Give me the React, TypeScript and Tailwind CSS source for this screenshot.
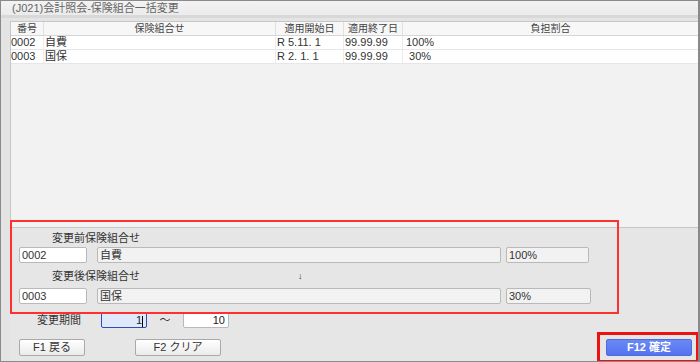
const font = { fontFamily: '"Liberation Sans", "Noto Sans CJK JP", sans-serif' };

const rows = [
  { code: "0002", name: "自費", from: "R 5.11. 1", to: "99.99.99", rate: "100%" },
  { code: "0003", name: "国保", from: "R 2. 1. 1", to: "99.99.99", rate: " 30%" },
];

const cols = "grid grid-cols-[33px_232px_68px_59px_1fr]";

function Field({ w, value, white }: { w: string; value: string; white?: boolean }) {
  return (
    <div
      className={`${w} h-[16px] rounded-[2px] border border-[#b9b9b9] pl-[2px] text-[11px] leading-[14px] text-[#333] ${white ? "bg-white" : "bg-[#f2f2f2]"}`}
    >
      {value}
    </div>
  );
}

function Btn({ w, label }: { w: string; label: string }) {
  return (
    <div
      className={`${w} h-[17px] rounded-[2px] border border-[#a9a9a9] bg-gradient-to-b from-white to-[#ebebeb] text-center text-[11px] leading-[15px] text-[#333]`}
    >
      {label}
    </div>
  );
}

export default function App() {
  return (
    <div className="relative w-[700px] h-[362px] overflow-hidden bg-[#e6e6e6] border border-r-2 border-[#8a8a8a] flex flex-col" style={font}>
      {/* title bar */}
      <div className="h-[14px] bg-gradient-to-b from-[#f3f3f3] to-[#ebebeb] pl-[11px] text-[11px] leading-[14px] text-[#666]">
        (J021)会計照会-保険組合一括変更
      </div>
      <div className="h-[3px] bg-[#d8d8d8]" />
      <div className="h-[3px] bg-[#e4e4e4]" />

      <div className="flex flex-1">
        <div className="w-[9px] bg-[#e4e4e4]" />
        <div className="flex-1 flex flex-col">
          {/* list */}
          <div className="h-[207px] bg-[#f2f2f2] border-l border-t border-b border-[#c6c6c6]">
            <div className={`${cols} h-[14px] bg-[#f7f7f7] border-b border-[#d6d6d6] text-[10px] leading-[13px] text-[#444] text-center`}>
              <div className="border-r border-[#e0e0e0]">番号</div>
              <div className="border-r border-[#e0e0e0]">保険組合せ</div>
              <div className="border-r border-[#e0e0e0]">適用開始日</div>
              <div className="border-r border-[#e0e0e0]">適用終了日</div>
              <div>負担割合</div>
            </div>
            {rows.map((r) => (
              <div key={r.code} className={`${cols} h-[14px] bg-white border-b border-[#e6e6e6] text-[11px] leading-[13px] text-[#333]`}>
                <div className="border-r border-[#ececec]">{r.code}</div>
                <div className="border-r border-[#ececec] pl-[1px]">{r.name}</div>
                <div className="border-r border-[#ececec] pl-[1px]">{r.from}</div>
                <div className="border-r border-[#ececec] pl-[1px]">{r.to}</div>
                <div className="pl-[3px] whitespace-pre">{r.rate}</div>
              </div>
            ))}
          </div>

          {/* edit panel */}
          <div className="flex-1 flex flex-col text-[11px] text-[#333]">
            <div className="mt-[3px] pl-[42px] h-[14px] leading-[14px]">変更前保険組合せ</div>
            <div className="mt-[2px] flex pl-[9px]">
              <Field w="w-[68px]" value="0002" white />
              <div className="w-[10px]" />
              <Field w="w-[404px]" value="自費" />
              <div className="w-[5px]" />
              <Field w="w-[83px]" value="100%" />
            </div>
            <div className="mt-[6px] flex pl-[42px] h-[14px] leading-[14px]">
              <span className="w-[246px]">変更後保険組合せ</span>
              <span className="text-[9px]">↓</span>
            </div>
            <div className="mt-[5px] flex pl-[9px]">
              <Field w="w-[68px]" value="0003" white />
              <div className="w-[10px]" />
              <Field w="w-[404px]" value="国保" />
              <div className="w-[5px]" />
              <Field w="w-[85px]" value="30%" />
            </div>
            <div className="mt-[8px] flex items-center pl-[27px]">
              <span className="w-[64px] leading-[14px]">変更期間</span>
              <div className="w-[46px] h-[16px] rounded-[2px] border border-[#2b4db8] bg-[#dfe9fb] pr-[3px] text-right leading-[14px] text-[#222]">
                1<span className="inline-block w-px h-[11px] bg-black align-middle" />
              </div>
              <span className="w-[36px] text-center leading-[14px]">〜</span>
              <div className="w-[46px] h-[16px] rounded-[2px] border border-[#b9b9b9] bg-white pr-[3px] text-right leading-[14px] text-[#222]">
                10
              </div>
            </div>
            <div className="mt-[11px] flex pl-[9px] pr-[6px]">
              <Btn w="w-[66px]" label="F1 戻る" />
              <div className="w-[50px]" />
              <Btn w="w-[86px]" label="F2 クリア" />
              <div className="flex-1" />
              <div className="w-[86px] h-[17px] rounded-[2px] border border-[#4d6be0] bg-gradient-to-b from-[#6a88f6] to-[#5573ee] text-center text-[11px] font-bold leading-[15px] text-white">
                F12 確定
              </div>
            </div>
          </div>
        </div>
      </div>

      {/* annotation boxes */}
      <div className="absolute left-[9px] top-[219px] w-[609px] h-[94px] border-2 border-[#ff3030]" />
      <div className="absolute left-[596px] top-[331px] w-[102px] h-[31px] border-[3px] border-[#ee1111]" />
    </div>
  );
}
